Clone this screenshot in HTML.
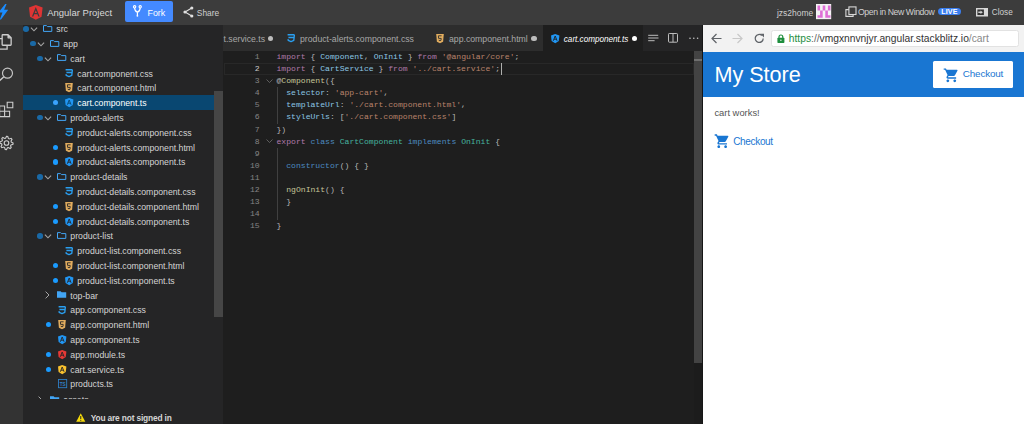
<!DOCTYPE html><html><head><meta charset="utf-8"><style>
*{margin:0;padding:0;box-sizing:border-box}
html,body{width:1024px;height:424px;overflow:hidden;background:#1e1e1e;font-family:"Liberation Sans", sans-serif}
.a{position:absolute}
.t{position:absolute;white-space:pre;line-height:1}
.tr{font-size:8.6px;color:#cccccc}
.cd{position:absolute;white-space:pre;font-family:"Liberation Mono", monospace;font-size:8.1px;line-height:12.1px;color:#d4d4d4}
svg{position:absolute;overflow:visible}
</style></head><body>
<div class="a" style="left:0;top:0;width:1024px;height:25px;background:#3c3c3c"></div>
<svg style="left:0;top:0" width="10" height="25"><path d="M5.2 4 L6.6 4 L4.1 9.7 L8.2 9.7 L1 19.4 L-0.2 19.4 L2.5 12.4 L-1.5 12.4 Z" fill="#1a8cff"/></svg>
<svg style="left:28.9px;top:5.2px" width="13.6" height="14.8" viewBox="0 0 250 266" preserveAspectRatio="none"><path d="M125 0 L0 44 L19 210 L125 266 L231 210 L250 44 Z" fill="#df3434"/><path d="M125 36 L54 205 H80 L95 168 H155 L170 205 H196 Z M125 94 L146 146 H104 Z" fill="#3c3c3c"/></svg>
<div class="t" style="left:47.2px;top:8.26px;font-size:9.5px;color:#d8d8d8;font-weight:400;font-style:normal;font-family:'Liberation Sans', sans-serif;">Angular Project</div>
<div class="a" style="left:125px;top:1.3px;width:48.3px;height:20.7px;background:#448aff;border-radius:2px"></div>
<svg style="left:133px;top:5.3px" width="9" height="12" viewBox="0 0 9 12"><circle cx="1.6" cy="1.8" r="1.15" fill="none" stroke="#fff" stroke-width="1.1"/><circle cx="7.2" cy="1.8" r="1.15" fill="none" stroke="#fff" stroke-width="1.1"/><path d="M1.6 3 Q1.9 6.5 4.4 7.2 Q6.9 6.5 7.2 3 M4.4 7.2 V10.5" fill="none" stroke="#fff" stroke-width="1.2"/><circle cx="4.4" cy="10.8" r="0.9" fill="#fff"/></svg>
<div class="t" style="left:147.5px;top:9.27px;font-size:8.9px;color:#ffffff;font-weight:400;font-style:normal;font-family:'Liberation Sans', sans-serif;">Fork</div>
<svg style="left:183px;top:5.5px" width="11" height="12" viewBox="0 0 11 12"><path d="M8.8 2 L2 6 L8.8 10" fill="none" stroke="#e0e0e0" stroke-width="1.1"/><circle cx="8.8" cy="2" r="1.6" fill="#e0e0e0"/><circle cx="2" cy="6" r="1.6" fill="#e0e0e0"/><circle cx="8.8" cy="10" r="1.6" fill="#e0e0e0"/></svg>
<div class="t" style="left:196.8px;top:8.69px;font-size:8.4px;color:#d0d0d0;font-weight:400;font-style:normal;font-family:'Liberation Sans', sans-serif;">Share</div>
<div class="t" style="left:777px;top:8.95px;font-size:8.45px;color:#cfcfcf;font-weight:400;font-style:normal;font-family:'Liberation Sans', sans-serif;">jzs2home</div>
<svg style="left:816px;top:4px" width="15.2" height="15.2" viewBox="0 0 15.2 15.2"><rect width="15.2" height="15.2" fill="#f4f4f4"/><path d="M11.90 11.30h2.6v2.45h-2.6zM1.50 11.30h2.6v2.45h-2.6zM6.70 3.95h2.6v2.45h-2.6zM11.90 1.50h2.6v2.45h-2.6zM4.10 6.40h2.6v2.45h-2.6zM1.50 1.50h2.6v2.45h-2.6zM4.10 8.85h2.6v2.45h-2.6zM9.30 11.30h2.6v2.45h-2.6zM11.90 3.95h2.6v2.45h-2.6zM9.30 6.40h2.6v2.45h-2.6zM6.70 1.50h2.6v2.45h-2.6zM9.30 8.85h2.6v2.45h-2.6zM1.50 3.95h2.6v2.45h-2.6zM4.10 11.30h2.6v2.45h-2.6z" fill="#df6fd6"/></svg>
<svg style="left:844.5px;top:6px" width="12" height="11" viewBox="0 0 12 11"><rect x="3.9" y="0.9" width="7.1" height="7.6" fill="#3c3c3c" stroke="#d8d8d8" stroke-width="1.1"/><path d="M3.9 3.6 H0.9 V10.4 H8.1 V8.5" fill="none" stroke="#d8d8d8" stroke-width="1.1"/></svg>
<div class="t" style="left:858px;top:8.04px;font-size:8.7px;color:#d0d0d0;font-weight:400;font-style:normal;font-family:'Liberation Sans', sans-serif;letter-spacing:-0.4px">Open in New Window</div>
<div class="a" style="left:938px;top:8.3px;width:23px;height:7px;background:#3b7ff0;border-radius:4px"></div>
<div class="t" style="left:941.3px;top:8.89px;font-size:7.1px;color:#ffffff;font-weight:700;font-style:normal;font-family:'Liberation Sans', sans-serif;letter-spacing:0.1px">LIVE</div>
<svg style="left:975.8px;top:7.6px" width="12" height="8.5" viewBox="0 0 12 8.5"><rect x="0" y="0" width="12" height="8.5" fill="#d8d8d8"/><rect x="1.4" y="1.45" width="6.5" height="5.6" fill="#333333"/><path d="M2.3 3.5 H4.5 V2.5 L6.9 4.25 L4.5 6 V5 H2.3 Z" fill="#d0d0d0"/></svg>
<div class="t" style="left:991.8px;top:9.46px;font-size:8.2px;color:#d0d0d0;font-weight:400;font-style:normal;font-family:'Liberation Sans', sans-serif;">Close</div>
<div class="a" style="left:0;top:25px;width:23px;height:399px;background:#333333"></div>
<svg style="left:0;top:30px" width="14" height="22" viewBox="0 0 14 22"><path d="M2.15 5.4 Q2.15 4.75 2.8 4.75 H8.1 L11.15 7.8 V14.6 Q11.15 15.25 10.5 15.25 H2.8 Q2.15 15.25 2.15 14.6 Z M8.1 4.75 V7.8 H11.15" fill="none" stroke="#cdcdcd" stroke-width="1.3" stroke-linejoin="round"/><path d="M2.15 8.6 H-1 V19.1 H7.1 V15.25" fill="none" stroke="#cdcdcd" stroke-width="1.3"/></svg>
<svg style="left:-4px;top:65.4px" width="18" height="18" viewBox="0 0 18 18"><circle cx="11.5" cy="8.2" r="5.0" fill="none" stroke="#c4c4c4" stroke-width="1.2"/><path d="M7.6 12 L1 18" stroke="#cdcdcd" stroke-width="1.5"/></svg>
<svg style="left:0;top:101px" width="18" height="18" viewBox="0 0 18 18"><path d="M-0.4 5 H4.6 V10.3 H-0.4 Z M-0.4 10.3 H4.6 V15.6 H-0.4 Z M4.6 10.3 H9.6 V15.6 H4.6 Z M7.2 1.2 H12.8 V6.8 H7.2 Z" fill="none" stroke="#cdcdcd" stroke-width="1.1"/></svg>
<svg style="left:0;top:0" width="20" height="160"><polygon points="6.50,136.40 7.79,136.53 8.38,138.47 9.22,138.93 11.17,138.33 11.99,139.33 11.03,141.12 11.31,142.04 13.10,143.00 12.97,144.29 11.03,144.88 10.57,145.72 11.17,147.67 10.17,148.49 8.38,147.53 7.46,147.81 6.50,149.60 5.21,149.47 4.62,147.53 3.78,147.07 1.83,147.67 1.01,146.67 1.97,144.88 1.69,143.96 -0.10,143.00 0.03,141.71 1.97,141.12 2.43,140.28 1.83,138.33 2.83,137.51 4.62,138.47 5.54,138.19" fill="none" stroke="#cdcdcd" stroke-width="1.1"/><circle cx="6.5" cy="143" r="2.3" fill="none" stroke="#cdcdcd" stroke-width="1.1"/></svg>
<div class="a" style="left:23px;top:25px;width:200px;height:399px;background:#252526"></div>
<div class="a" style="left:0;top:25px;width:214px;height:374.3px;overflow:hidden"><div class="a" style="left:0;top:-25px;width:214px;height:424px">
<div class="a" style="left:23px;top:94.7px;width:191px;height:15.3px;background:#094771"></div>
<div class="a" style="left:23.40px;top:26.00px;width:5.6px;height:5.6px;border-radius:50%;background:#1a69a6"></div>
<svg style="left:30.10px;top:27.00px" width="8" height="5" viewBox="0 0 8 5"><path d="M0.9 0.7 L4 3.8 L7.1 0.7" fill="none" stroke="#a4a4a4" stroke-width="1.15"/></svg>
<svg style="left:43.20px;top:24.70px" width="10" height="7" viewBox="0 0 10 7"><path d="M0.5 0.6 H3.5 L4.5 1.6 H8.8 V6.4 H0.5 Z" fill="none" stroke="#42a5f5" stroke-width="1"/></svg>
<div class="t" style="left:56.3px;top:25.22px;font-size:8.72px;color:#d4d4d4;font-weight:400;font-style:normal;font-family:'Liberation Sans', sans-serif;">src</div>
<div class="a" style="left:30.40px;top:40.80px;width:5.6px;height:5.6px;border-radius:50%;background:#1a69a6"></div>
<svg style="left:37.10px;top:41.80px" width="8" height="5" viewBox="0 0 8 5"><path d="M0.9 0.7 L4 3.8 L7.1 0.7" fill="none" stroke="#a4a4a4" stroke-width="1.15"/></svg>
<svg style="left:50.20px;top:39.50px" width="10" height="7" viewBox="0 0 10 7"><path d="M0.5 0.6 H3.5 L4.5 1.6 H8.8 V6.4 H0.5 Z" fill="none" stroke="#42a5f5" stroke-width="1"/></svg>
<div class="t" style="left:63.3px;top:40.02px;font-size:8.72px;color:#d4d4d4;font-weight:400;font-style:normal;font-family:'Liberation Sans', sans-serif;">app</div>
<div class="a" style="left:37.40px;top:55.60px;width:5.6px;height:5.6px;border-radius:50%;background:#1a69a6"></div>
<svg style="left:44.10px;top:56.60px" width="8" height="5" viewBox="0 0 8 5"><path d="M0.9 0.7 L4 3.8 L7.1 0.7" fill="none" stroke="#a4a4a4" stroke-width="1.15"/></svg>
<svg style="left:57.20px;top:54.30px" width="10" height="7" viewBox="0 0 10 7"><path d="M0.5 0.6 H3.5 L4.5 1.6 H8.8 V6.4 H0.5 Z" fill="none" stroke="#42a5f5" stroke-width="1"/></svg>
<div class="t" style="left:70.3px;top:54.82px;font-size:8.72px;color:#d4d4d4;font-weight:400;font-style:normal;font-family:'Liberation Sans', sans-serif;">cart</div>
<svg style="left:65.10px;top:69.00px" width="8" height="8.4" viewBox="0 0 8 8.4"><path d="M0.6 0.8 H7.4 M1.4 3.5 H6.8 M1 5.1 L1.2 6.4 L4 7.6 L6.8 6.4 L7.4 0.8" fill="none" stroke="#2a9ff0" stroke-width="1.35" stroke-linejoin="round"/></svg>
<div class="t" style="left:77.3px;top:69.62px;font-size:8.72px;color:#d4d4d4;font-weight:400;font-style:normal;font-family:'Liberation Sans', sans-serif;">cart.component.css</div>
<svg style="left:65.10px;top:83.40px" width="8" height="9.2" viewBox="0 0 8 9.2"><path d="M0.2 0 H7.8 L7.1 7.8 L4 9.2 L0.9 7.8 Z" fill="#e2ad5f"/><path d="M5.6 1.8 H2.4 L2.6 4.4 H5.2 L5 6.4 L4 6.8 L3 6.4 L2.9 5.8" fill="none" stroke="#252526" stroke-width="0.9"/></svg>
<div class="t" style="left:77.3px;top:84.42px;font-size:8.72px;color:#d4d4d4;font-weight:400;font-style:normal;font-family:'Liberation Sans', sans-serif;">cart.component.html</div>
<div class="a" style="left:52.80px;top:100.20px;width:5.2px;height:5.2px;border-radius:50%;background:#3aa3ff"></div>
<svg style="left:64.90px;top:98.20px" width="8.4" height="9.2" viewBox="0 0 8.4 9.2"><path d="M4.2 0 L8.4 1.6 L7.8 7 L4.2 9.2 L0.6 7 L0 1.6 Z" fill="#2196f3"/><path d="M2.3 6.8 L4.2 2 L6.1 6.8 M3 5.2 H5.4" fill="none" stroke="#094771" stroke-width="0.9"/></svg>
<div class="t" style="left:77.3px;top:99.22px;font-size:8.72px;color:#ffffff;font-weight:400;font-style:normal;font-family:'Liberation Sans', sans-serif;">cart.component.ts</div>
<div class="a" style="left:37.40px;top:114.80px;width:5.6px;height:5.6px;border-radius:50%;background:#1a69a6"></div>
<svg style="left:44.10px;top:115.80px" width="8" height="5" viewBox="0 0 8 5"><path d="M0.9 0.7 L4 3.8 L7.1 0.7" fill="none" stroke="#a4a4a4" stroke-width="1.15"/></svg>
<svg style="left:57.20px;top:113.50px" width="10" height="7" viewBox="0 0 10 7"><path d="M0.5 0.6 H3.5 L4.5 1.6 H8.8 V6.4 H0.5 Z" fill="none" stroke="#42a5f5" stroke-width="1"/></svg>
<div class="t" style="left:70.3px;top:114.02px;font-size:8.72px;color:#d4d4d4;font-weight:400;font-style:normal;font-family:'Liberation Sans', sans-serif;">product-alerts</div>
<svg style="left:65.10px;top:128.20px" width="8" height="8.4" viewBox="0 0 8 8.4"><path d="M0.6 0.8 H7.4 M1.4 3.5 H6.8 M1 5.1 L1.2 6.4 L4 7.6 L6.8 6.4 L7.4 0.8" fill="none" stroke="#2a9ff0" stroke-width="1.35" stroke-linejoin="round"/></svg>
<div class="t" style="left:77.3px;top:128.82px;font-size:8.72px;color:#d4d4d4;font-weight:400;font-style:normal;font-family:'Liberation Sans', sans-serif;">product-alerts.component.css</div>
<div class="a" style="left:52.80px;top:144.60px;width:5.2px;height:5.2px;border-radius:50%;background:#1a9bff"></div>
<svg style="left:65.10px;top:142.60px" width="8" height="9.2" viewBox="0 0 8 9.2"><path d="M0.2 0 H7.8 L7.1 7.8 L4 9.2 L0.9 7.8 Z" fill="#e2ad5f"/><path d="M5.6 1.8 H2.4 L2.6 4.4 H5.2 L5 6.4 L4 6.8 L3 6.4 L2.9 5.8" fill="none" stroke="#252526" stroke-width="0.9"/></svg>
<div class="t" style="left:77.3px;top:143.62px;font-size:8.72px;color:#d4d4d4;font-weight:400;font-style:normal;font-family:'Liberation Sans', sans-serif;">product-alerts.component.html</div>
<div class="a" style="left:52.80px;top:159.40px;width:5.2px;height:5.2px;border-radius:50%;background:#1a9bff"></div>
<svg style="left:64.90px;top:157.40px" width="8.4" height="9.2" viewBox="0 0 8.4 9.2"><path d="M4.2 0 L8.4 1.6 L7.8 7 L4.2 9.2 L0.6 7 L0 1.6 Z" fill="#2196f3"/><path d="M2.3 6.8 L4.2 2 L6.1 6.8 M3 5.2 H5.4" fill="none" stroke="#252526" stroke-width="0.9"/></svg>
<div class="t" style="left:77.3px;top:158.42px;font-size:8.72px;color:#d4d4d4;font-weight:400;font-style:normal;font-family:'Liberation Sans', sans-serif;">product-alerts.component.ts</div>
<div class="a" style="left:37.40px;top:174.00px;width:5.6px;height:5.6px;border-radius:50%;background:#1a69a6"></div>
<svg style="left:44.10px;top:175.00px" width="8" height="5" viewBox="0 0 8 5"><path d="M0.9 0.7 L4 3.8 L7.1 0.7" fill="none" stroke="#a4a4a4" stroke-width="1.15"/></svg>
<svg style="left:57.20px;top:172.70px" width="10" height="7" viewBox="0 0 10 7"><path d="M0.5 0.6 H3.5 L4.5 1.6 H8.8 V6.4 H0.5 Z" fill="none" stroke="#42a5f5" stroke-width="1"/></svg>
<div class="t" style="left:70.3px;top:173.22px;font-size:8.72px;color:#d4d4d4;font-weight:400;font-style:normal;font-family:'Liberation Sans', sans-serif;">product-details</div>
<svg style="left:65.10px;top:187.40px" width="8" height="8.4" viewBox="0 0 8 8.4"><path d="M0.6 0.8 H7.4 M1.4 3.5 H6.8 M1 5.1 L1.2 6.4 L4 7.6 L6.8 6.4 L7.4 0.8" fill="none" stroke="#2a9ff0" stroke-width="1.35" stroke-linejoin="round"/></svg>
<div class="t" style="left:77.3px;top:188.02px;font-size:8.72px;color:#d4d4d4;font-weight:400;font-style:normal;font-family:'Liberation Sans', sans-serif;">product-details.component.css</div>
<div class="a" style="left:52.80px;top:203.80px;width:5.2px;height:5.2px;border-radius:50%;background:#1a9bff"></div>
<svg style="left:65.10px;top:201.80px" width="8" height="9.2" viewBox="0 0 8 9.2"><path d="M0.2 0 H7.8 L7.1 7.8 L4 9.2 L0.9 7.8 Z" fill="#e2ad5f"/><path d="M5.6 1.8 H2.4 L2.6 4.4 H5.2 L5 6.4 L4 6.8 L3 6.4 L2.9 5.8" fill="none" stroke="#252526" stroke-width="0.9"/></svg>
<div class="t" style="left:77.3px;top:202.82px;font-size:8.72px;color:#d4d4d4;font-weight:400;font-style:normal;font-family:'Liberation Sans', sans-serif;">product-details.component.html</div>
<div class="a" style="left:52.80px;top:218.60px;width:5.2px;height:5.2px;border-radius:50%;background:#1a9bff"></div>
<svg style="left:64.90px;top:216.60px" width="8.4" height="9.2" viewBox="0 0 8.4 9.2"><path d="M4.2 0 L8.4 1.6 L7.8 7 L4.2 9.2 L0.6 7 L0 1.6 Z" fill="#2196f3"/><path d="M2.3 6.8 L4.2 2 L6.1 6.8 M3 5.2 H5.4" fill="none" stroke="#252526" stroke-width="0.9"/></svg>
<div class="t" style="left:77.3px;top:217.62px;font-size:8.72px;color:#d4d4d4;font-weight:400;font-style:normal;font-family:'Liberation Sans', sans-serif;">product-details.component.ts</div>
<div class="a" style="left:37.40px;top:233.20px;width:5.6px;height:5.6px;border-radius:50%;background:#1a69a6"></div>
<svg style="left:44.10px;top:234.20px" width="8" height="5" viewBox="0 0 8 5"><path d="M0.9 0.7 L4 3.8 L7.1 0.7" fill="none" stroke="#a4a4a4" stroke-width="1.15"/></svg>
<svg style="left:57.20px;top:231.90px" width="10" height="7" viewBox="0 0 10 7"><path d="M0.5 0.6 H3.5 L4.5 1.6 H8.8 V6.4 H0.5 Z" fill="none" stroke="#42a5f5" stroke-width="1"/></svg>
<div class="t" style="left:70.3px;top:232.42px;font-size:8.72px;color:#d4d4d4;font-weight:400;font-style:normal;font-family:'Liberation Sans', sans-serif;">product-list</div>
<svg style="left:65.10px;top:246.60px" width="8" height="8.4" viewBox="0 0 8 8.4"><path d="M0.6 0.8 H7.4 M1.4 3.5 H6.8 M1 5.1 L1.2 6.4 L4 7.6 L6.8 6.4 L7.4 0.8" fill="none" stroke="#2a9ff0" stroke-width="1.35" stroke-linejoin="round"/></svg>
<div class="t" style="left:77.3px;top:247.22px;font-size:8.72px;color:#d4d4d4;font-weight:400;font-style:normal;font-family:'Liberation Sans', sans-serif;">product-list.component.css</div>
<div class="a" style="left:52.80px;top:263.00px;width:5.2px;height:5.2px;border-radius:50%;background:#1a9bff"></div>
<svg style="left:65.10px;top:261.00px" width="8" height="9.2" viewBox="0 0 8 9.2"><path d="M0.2 0 H7.8 L7.1 7.8 L4 9.2 L0.9 7.8 Z" fill="#e2ad5f"/><path d="M5.6 1.8 H2.4 L2.6 4.4 H5.2 L5 6.4 L4 6.8 L3 6.4 L2.9 5.8" fill="none" stroke="#252526" stroke-width="0.9"/></svg>
<div class="t" style="left:77.3px;top:262.02px;font-size:8.72px;color:#d4d4d4;font-weight:400;font-style:normal;font-family:'Liberation Sans', sans-serif;">product-list.component.html</div>
<div class="a" style="left:52.80px;top:277.80px;width:5.2px;height:5.2px;border-radius:50%;background:#1a9bff"></div>
<svg style="left:64.90px;top:275.80px" width="8.4" height="9.2" viewBox="0 0 8.4 9.2"><path d="M4.2 0 L8.4 1.6 L7.8 7 L4.2 9.2 L0.6 7 L0 1.6 Z" fill="#2196f3"/><path d="M2.3 6.8 L4.2 2 L6.1 6.8 M3 5.2 H5.4" fill="none" stroke="#252526" stroke-width="0.9"/></svg>
<div class="t" style="left:77.3px;top:276.82px;font-size:8.72px;color:#d4d4d4;font-weight:400;font-style:normal;font-family:'Liberation Sans', sans-serif;">product-list.component.ts</div>
<svg style="left:45.10px;top:291.40px" width="5" height="8" viewBox="0 0 5 8"><path d="M0.6 0.6 L4 4 L0.6 7.4" fill="none" stroke="#b4b4b4" stroke-width="0.9"/></svg>
<svg style="left:57.20px;top:291.10px" width="10" height="7" viewBox="0 0 10 7"><path d="M0 0.2 H3.6 L4.6 1.2 H9.2 V6.8 H0 Z" fill="#42a5f5"/></svg>
<div class="t" style="left:70.3px;top:291.62px;font-size:8.72px;color:#d4d4d4;font-weight:400;font-style:normal;font-family:'Liberation Sans', sans-serif;">top-bar</div>
<svg style="left:58.10px;top:305.80px" width="8" height="8.4" viewBox="0 0 8 8.4"><path d="M0.6 0.8 H7.4 M1.4 3.5 H6.8 M1 5.1 L1.2 6.4 L4 7.6 L6.8 6.4 L7.4 0.8" fill="none" stroke="#2a9ff0" stroke-width="1.35" stroke-linejoin="round"/></svg>
<div class="t" style="left:70.3px;top:306.42px;font-size:8.72px;color:#d4d4d4;font-weight:400;font-style:normal;font-family:'Liberation Sans', sans-serif;">app.component.css</div>
<div class="a" style="left:45.80px;top:322.20px;width:5.2px;height:5.2px;border-radius:50%;background:#1a9bff"></div>
<svg style="left:58.10px;top:320.20px" width="8" height="9.2" viewBox="0 0 8 9.2"><path d="M0.2 0 H7.8 L7.1 7.8 L4 9.2 L0.9 7.8 Z" fill="#e2ad5f"/><path d="M5.6 1.8 H2.4 L2.6 4.4 H5.2 L5 6.4 L4 6.8 L3 6.4 L2.9 5.8" fill="none" stroke="#252526" stroke-width="0.9"/></svg>
<div class="t" style="left:70.3px;top:321.22px;font-size:8.72px;color:#d4d4d4;font-weight:400;font-style:normal;font-family:'Liberation Sans', sans-serif;">app.component.html</div>
<svg style="left:57.90px;top:335.00px" width="8.4" height="9.2" viewBox="0 0 8.4 9.2"><path d="M4.2 0 L8.4 1.6 L7.8 7 L4.2 9.2 L0.6 7 L0 1.6 Z" fill="#2196f3"/><path d="M2.3 6.8 L4.2 2 L6.1 6.8 M3 5.2 H5.4" fill="none" stroke="#252526" stroke-width="0.9"/></svg>
<div class="t" style="left:70.3px;top:336.02px;font-size:8.72px;color:#d4d4d4;font-weight:400;font-style:normal;font-family:'Liberation Sans', sans-serif;">app.component.ts</div>
<div class="a" style="left:45.80px;top:351.80px;width:5.2px;height:5.2px;border-radius:50%;background:#1a9bff"></div>
<svg style="left:57.90px;top:349.80px" width="8.4" height="9.2" viewBox="0 0 8.4 9.2"><path d="M4.2 0 L8.4 1.6 L7.8 7 L4.2 9.2 L0.6 7 L0 1.6 Z" fill="#e53935"/><path d="M2.3 6.8 L4.2 2 L6.1 6.8 M3 5.2 H5.4" fill="none" stroke="#252526" stroke-width="0.9"/></svg>
<div class="t" style="left:70.3px;top:350.82px;font-size:8.72px;color:#d4d4d4;font-weight:400;font-style:normal;font-family:'Liberation Sans', sans-serif;">app.module.ts</div>
<div class="a" style="left:45.80px;top:366.60px;width:5.2px;height:5.2px;border-radius:50%;background:#1a9bff"></div>
<svg style="left:57.90px;top:364.60px" width="8.4" height="9.2" viewBox="0 0 8.4 9.2"><path d="M4.2 0 L8.4 1.6 L7.8 7 L4.2 9.2 L0.6 7 L0 1.6 Z" fill="#f9c12e"/><path d="M2.3 6.8 L4.2 2 L6.1 6.8 M3 5.2 H5.4" fill="none" stroke="#252526" stroke-width="0.9"/></svg>
<div class="t" style="left:70.3px;top:365.62px;font-size:8.72px;color:#d4d4d4;font-weight:400;font-style:normal;font-family:'Liberation Sans', sans-serif;">cart.service.ts</div>
<svg style="left:57.50px;top:379.40px" width="9.2" height="9.2" viewBox="0 0 9.2 9.2"><rect x="0.5" y="0.5" width="8.2" height="8.2" fill="none" stroke="#2f7fc4" stroke-width="0.9"/><text x="4.6" y="7.2" font-size="4.6" font-family="Liberation Sans" font-weight="700" text-anchor="middle" fill="#2f7fc4">TS</text></svg>
<div class="t" style="left:70.3px;top:380.42px;font-size:8.72px;color:#d4d4d4;font-weight:400;font-style:normal;font-family:'Liberation Sans', sans-serif;">products.ts</div>
<svg style="left:38.10px;top:396.00px" width="5" height="8" viewBox="0 0 5 8"><path d="M0.6 0.6 L4 4 L0.6 7.4" fill="none" stroke="#b4b4b4" stroke-width="0.9"/></svg>
<svg style="left:50.20px;top:395.70px" width="10" height="7" viewBox="0 0 10 7"><path d="M0 0.2 H3.6 L4.6 1.2 H9.2 V6.8 H0 Z" fill="#42a5f5"/></svg>
<div class="t" style="left:63.3px;top:396.22px;font-size:8.72px;color:#d4d4d4;font-weight:400;font-style:normal;font-family:'Liberation Sans', sans-serif;">assets</div>
</div></div>
<div class="a" style="left:23px;top:386px;width:191px;height:13.5px;overflow:hidden">
</div>
<div class="a" style="left:214px;top:91px;width:9px;height:226px;background:#464646"></div>
<div class="a" style="left:23px;top:399.5px;width:191px;height:25px;background:#252526"></div>
<svg style="left:75.5px;top:413px" width="9.5" height="9" viewBox="0 0 9.5 9"><path d="M4.75 0.3 L9.3 8.7 H0.2 Z" fill="#f5d90a"/><path d="M4.75 3 V6 M4.75 6.8 V7.8" stroke="#252526" stroke-width="1"/></svg>
<div class="t" style="left:90.7px;top:413.79px;font-size:8.4px;color:#d4d4d4;font-weight:700;font-style:normal;font-family:'Liberation Sans', sans-serif;letter-spacing:-0.17px">You are not signed in</div>
<div class="a" style="left:223px;top:25px;width:480px;height:26px;background:#252526"></div>
<div class="a" style="left:223px;top:25px;width:201px;height:26px;background:#2d2d2d"></div>
<div class="a" style="left:424px;top:25px;width:119px;height:26px;background:#2d2d2d"></div>
<div class="a" style="left:543px;top:25px;width:100px;height:26px;background:#1e1e1e"></div>
<div class="t" style="left:223.5px;top:35.04px;font-size:8.7px;color:#a8a8a8;font-weight:400;font-style:normal;font-family:'Liberation Sans', sans-serif;">t.service.ts</div>
<div class="a" style="left:267.90px;top:35.80px;width:5.2px;height:5.2px;border-radius:50%;background:#bdbdbd"></div>
<svg style="left:287.30px;top:34.20px" width="8" height="8.4" viewBox="0 0 8 8.4"><path d="M0.6 0.8 H7.4 M1.4 3.5 H6.8 M1 5.1 L1.2 6.4 L4 7.6 L6.8 6.4 L7.4 0.8" fill="none" stroke="#2a9ff0" stroke-width="1.35" stroke-linejoin="round"/></svg>
<div class="t" style="left:300px;top:35.04px;font-size:8.7px;color:#a8a8a8;font-weight:400;font-style:normal;font-family:'Liberation Sans', sans-serif;">product-alerts.component.css</div>
<svg style="left:436.30px;top:33.80px" width="8" height="9.2" viewBox="0 0 8 9.2"><path d="M0.2 0 H7.8 L7.1 7.8 L4 9.2 L0.9 7.8 Z" fill="#e2ad5f"/><path d="M5.6 1.8 H2.4 L2.6 4.4 H5.2 L5 6.4 L4 6.8 L3 6.4 L2.9 5.8" fill="none" stroke="#2d2d2d" stroke-width="0.9"/></svg>
<div class="t" style="left:449px;top:35.04px;font-size:8.7px;color:#a8a8a8;font-weight:400;font-style:normal;font-family:'Liberation Sans', sans-serif;">app.component.html</div>
<div class="a" style="left:531.40px;top:35.80px;width:5.2px;height:5.2px;border-radius:50%;background:#bdbdbd"></div>
<svg style="left:550.80px;top:33.80px" width="8.4" height="9.2" viewBox="0 0 8.4 9.2"><path d="M4.2 0 L8.4 1.6 L7.8 7 L4.2 9.2 L0.6 7 L0 1.6 Z" fill="#2196f3"/><path d="M2.3 6.8 L4.2 2 L6.1 6.8 M3 5.2 H5.4" fill="none" stroke="#1e1e1e" stroke-width="0.9"/></svg>
<div class="t" style="left:563.8px;top:35.50px;font-size:8.15px;color:#ffffff;font-weight:400;font-style:italic;font-family:'Liberation Sans', sans-serif;">cart.component.ts</div>
<div class="a" style="left:631.70px;top:35.80px;width:5.4px;height:5.4px;border-radius:50%;background:#ffffff"></div>
<svg style="left:647.5px;top:33px" width="12" height="10" viewBox="0 0 12 10"><path d="M0.2 2.3 H10.2 M0.2 5 H10.5 M0.2 7.7 H6.6" stroke="#c5c5c5" stroke-width="0.95"/></svg>
<svg style="left:668.3px;top:33.3px" width="11" height="10" viewBox="0 0 11 10"><rect x="0.5" y="0.5" width="9" height="8.7" rx="0.8" fill="none" stroke="#c5c5c5" stroke-width="0.95"/><path d="M5 0.5 V9.2" stroke="#c5c5c5" stroke-width="0.95"/></svg>
<svg style="left:688.5px;top:37px" width="10" height="3" viewBox="0 0 10 3"><circle cx="1" cy="1.2" r="0.8" fill="#c5c5c5"/><circle cx="4.8" cy="1.2" r="0.8" fill="#c5c5c5"/><circle cx="8.6" cy="1.2" r="0.8" fill="#c5c5c5"/></svg>
<div class="a" style="left:223px;top:51px;width:480px;height:373px;background:#1e1e1e"></div>
<div class="a" style="left:224px;top:63.05px;width:470px;height:12.1px;border:1px solid #282828"></div>
<div class="cd" style="left:229.6px;top:50.95px;width:30px;text-align:right;color:#858585">1</div>
<div class="cd" style="left:229.6px;top:63.05px;width:30px;text-align:right;color:#c6c6c6">2</div>
<div class="cd" style="left:229.6px;top:75.15px;width:30px;text-align:right;color:#858585">3</div>
<div class="cd" style="left:229.6px;top:87.25px;width:30px;text-align:right;color:#858585">4</div>
<div class="cd" style="left:229.6px;top:99.35px;width:30px;text-align:right;color:#858585">5</div>
<div class="cd" style="left:229.6px;top:111.45px;width:30px;text-align:right;color:#858585">6</div>
<div class="cd" style="left:229.6px;top:123.55px;width:30px;text-align:right;color:#858585">7</div>
<div class="cd" style="left:229.6px;top:135.65px;width:30px;text-align:right;color:#858585">8</div>
<div class="cd" style="left:229.6px;top:147.75px;width:30px;text-align:right;color:#858585">9</div>
<div class="cd" style="left:229.6px;top:159.85px;width:30px;text-align:right;color:#858585">10</div>
<div class="cd" style="left:229.6px;top:171.95px;width:30px;text-align:right;color:#858585">11</div>
<div class="cd" style="left:229.6px;top:184.05px;width:30px;text-align:right;color:#858585">12</div>
<div class="cd" style="left:229.6px;top:196.15px;width:30px;text-align:right;color:#858585">13</div>
<div class="cd" style="left:229.6px;top:208.25px;width:30px;text-align:right;color:#858585">14</div>
<div class="cd" style="left:229.6px;top:220.35px;width:30px;text-align:right;color:#858585">15</div>
<svg style="left:265.9px;top:78.90px" width="7" height="4.5" viewBox="0 0 7 4.5"><path d="M0.5 0.5 L3.5 3.5 L6.5 0.5" fill="none" stroke="#707070" stroke-width="0.8"/></svg>
<svg style="left:265.9px;top:139.40px" width="7" height="4.5" viewBox="0 0 7 4.5"><path d="M0.5 0.5 L3.5 3.5 L6.5 0.5" fill="none" stroke="#707070" stroke-width="0.8"/></svg>
<div class="a" style="left:277.2px;top:87.25px;width:1px;height:36.30px;background:#404040"></div>
<div class="a" style="left:277.2px;top:147.75px;width:1px;height:72.60px;background:#404040"></div>
<div class="cd" style="left:276.5px;top:50.95px"><span style="color:#b07aab">import</span><span style="color:#b4b4b4"> { </span><span style="color:#8cc6e4">Component</span><span style="color:#b4b4b4">, </span><span style="color:#8cc6e4">OnInit</span><span style="color:#b4b4b4"> } </span><span style="color:#b07aab">from</span><span style="color:#b4b4b4"> </span><span style="color:#b9836b">'@angular/core'</span><span style="color:#b4b4b4">;</span></div>
<div class="cd" style="left:276.5px;top:63.05px"><span style="color:#b07aab">import</span><span style="color:#b4b4b4"> { </span><span style="color:#8cc6e4">CartService</span><span style="color:#b4b4b4"> } </span><span style="color:#b07aab">from</span><span style="color:#b4b4b4"> </span><span style="color:#b9836b">'../cart.service'</span><span style="color:#b4b4b4">;</span></div>
<div class="cd" style="left:276.5px;top:75.15px"><span style="color:#b4b4b4">@</span><span style="color:#c6c699">Component</span><span style="color:#b4b4b4">({</span></div>
<div class="cd" style="left:276.5px;top:87.25px"><span style="color:#b4b4b4">  </span><span style="color:#8cc6e4">selector</span><span style="color:#b4b4b4">: </span><span style="color:#b9836b">'app-cart'</span><span style="color:#b4b4b4">,</span></div>
<div class="cd" style="left:276.5px;top:99.35px"><span style="color:#b4b4b4">  </span><span style="color:#8cc6e4">templateUrl</span><span style="color:#b4b4b4">: </span><span style="color:#b9836b">'./cart.component.html'</span><span style="color:#b4b4b4">,</span></div>
<div class="cd" style="left:276.5px;top:111.45px"><span style="color:#b4b4b4">  </span><span style="color:#8cc6e4">styleUrls</span><span style="color:#b4b4b4">: [</span><span style="color:#b9836b">'./cart.component.css'</span><span style="color:#b4b4b4">]</span></div>
<div class="cd" style="left:276.5px;top:123.55px"><span style="color:#b4b4b4">})</span></div>
<div class="cd" style="left:276.5px;top:135.65px"><span style="color:#b07aab">export</span><span style="color:#b4b4b4"> </span><span style="color:#4d8bc0">class</span><span style="color:#b4b4b4"> </span><span style="color:#46b49e">CartComponent</span><span style="color:#b4b4b4"> </span><span style="color:#4d8bc0">implements</span><span style="color:#b4b4b4"> </span><span style="color:#46b49e">OnInit</span><span style="color:#b4b4b4"> {</span></div>
<div class="cd" style="left:276.5px;top:147.75px"></div>
<div class="cd" style="left:276.5px;top:159.85px"><span style="color:#b4b4b4">  </span><span style="color:#4d8bc0">constructor</span><span style="color:#b4b4b4">() { }</span></div>
<div class="cd" style="left:276.5px;top:171.95px"></div>
<div class="cd" style="left:276.5px;top:184.05px"><span style="color:#b4b4b4">  </span><span style="color:#c6c699">ngOnInit</span><span style="color:#b4b4b4">() {</span></div>
<div class="cd" style="left:276.5px;top:196.15px"><span style="color:#b4b4b4">  }</span></div>
<div class="cd" style="left:276.5px;top:208.25px"></div>
<div class="cd" style="left:276.5px;top:220.35px"><span style="color:#b4b4b4">}</span></div>
<div class="a" style="left:500.9px;top:63.05px;width:1px;height:12.10px;background:#aeafad"></div>
<div class="a" style="left:694px;top:51px;width:9px;height:373px;background:#1c1c1c"></div>
<div class="a" style="left:694px;top:51px;width:9px;height:311.5px;background:#434343"></div>
<div class="a" style="left:694px;top:59.3px;width:9px;height:1.5px;background:#6e6e6e"></div>
<div class="a" style="left:702px;top:25px;width:1.2px;height:399px;background:#161616"></div>
<div class="a" style="left:703.2px;top:25px;width:321px;height:399px;background:#ffffff"></div>
<div class="a" style="left:703.2px;top:25px;width:321px;height:27px;background:#f2f2f2"></div>
<svg style="left:710.5px;top:33px" width="11" height="11" viewBox="0 0 11 11"><path d="M10.5 5.5 H1 M5.5 1 L1 5.5 L5.5 10" fill="none" stroke="#5f6368" stroke-width="1.2"/></svg>
<svg style="left:731.5px;top:33px" width="11" height="11" viewBox="0 0 11 11"><path d="M0.5 5.5 H10 M5.5 1 L10 5.5 L5.5 10" fill="none" stroke="#c8c8c8" stroke-width="1.2"/></svg>
<svg style="left:753.5px;top:33px" width="11" height="11" viewBox="0 0 11 11"><path d="M9.2 5.5 A4 4 0 1 1 7.8 2.4" fill="none" stroke="#5f6368" stroke-width="1.3"/><path d="M6.2 0.8 H10 V4.6 Z" fill="#5f6368"/></svg>
<div class="a" style="left:771.2px;top:29.7px;width:248.3px;height:17.4px;background:#ffffff;border:1px solid #e2e2e2;border-radius:2.5px"></div>
<svg style="left:777.2px;top:33.6px" width="8" height="10" viewBox="0 0 8 10"><path d="M2 4.4 V2.9 A1.9 1.9 0 0 1 5.8 2.9 V4.4" fill="none" stroke="#1e8e3e" stroke-width="1.2"/><rect x="0.4" y="3.7" width="7" height="5.3" rx="0.7" fill="#1e8e3e"/><circle cx="3.9" cy="6.3" r="0.75" fill="#e8f3ec"/></svg>
<div class="t" style="left:788.8px;top:34.21px;font-size:10.26px;color:#333333"><span style="color:#1e8e3e">https</span><span style="color:#666">://</span>vmgxnnvnjyr.angular.stackblitz.io<span style="color:#888">/cart</span></div>
<div class="a" style="left:703.2px;top:52px;width:321px;height:45.4px;background:#1976d2"></div>
<div class="t" style="left:714.4px;top:63.82px;font-size:21.6px;color:#ffffff;font-weight:400;font-style:normal;font-family:'Liberation Sans', sans-serif;">My Store</div>
<div class="a" style="left:933px;top:61.3px;width:80px;height:27px;background:#ffffff;border-radius:1.5px"></div>
<svg style="left:943.2px;top:66.6px" width="16.6" height="16.6" viewBox="0 0 24 24"><path d="M7 18c-1.1 0-2 .9-2 2s.9 2 2 2 2-.9 2-2-.9-2-2-2zM1 2v2h2l3.6 7.59-1.35 2.45c-.16.28-.25.61-.25.96 0 1.1.9 2 2 2h12v-2H7.42c-.14 0-.25-.11-.25-.25l.03-.12.9-1.63h7.45c.75 0 1.41-.41 1.75-1.03l3.58-6.49A1 1 0 0 0 20 4H5.21l-.94-2H1zm16 16c-1.1 0-2 .9-2 2s.9 2 2 2 2-.9 2-2-.9-2-2-2z" fill="#1976d2"/></svg>
<div class="t" style="left:962.8px;top:69.22px;font-size:9.9px;color:#1976d2;font-weight:400;font-style:normal;font-family:'Liberation Sans', sans-serif;letter-spacing:-0.17px">Checkout</div>
<div class="t" style="left:714.4px;top:107.94px;font-size:9.4px;color:#555555;font-weight:400;font-style:normal;font-family:'Liberation Sans', sans-serif;">cart works!</div>
<svg style="left:714.1px;top:133.3px" width="16.4" height="16.4" viewBox="0 0 24 24"><path d="M7 18c-1.1 0-2 .9-2 2s.9 2 2 2 2-.9 2-2-.9-2-2-2zM1 2v2h2l3.6 7.59-1.35 2.45c-.16.28-.25.61-.25.96 0 1.1.9 2 2 2h12v-2H7.42c-.14 0-.25-.11-.25-.25l.03-.12.9-1.63h7.45c.75 0 1.41-.41 1.75-1.03l3.58-6.49A1 1 0 0 0 20 4H5.21l-.94-2H1zm16 16c-1.1 0-2 .9-2 2s.9 2 2 2 2-.9 2-2-.9-2-2-2z" fill="#1976d2"/></svg>
<div class="t" style="left:733.2px;top:137.23px;font-size:10.0px;color:#1976d2;font-weight:400;font-style:normal;font-family:'Liberation Sans', sans-serif;letter-spacing:-0.33px">Checkout</div>
</body></html>
